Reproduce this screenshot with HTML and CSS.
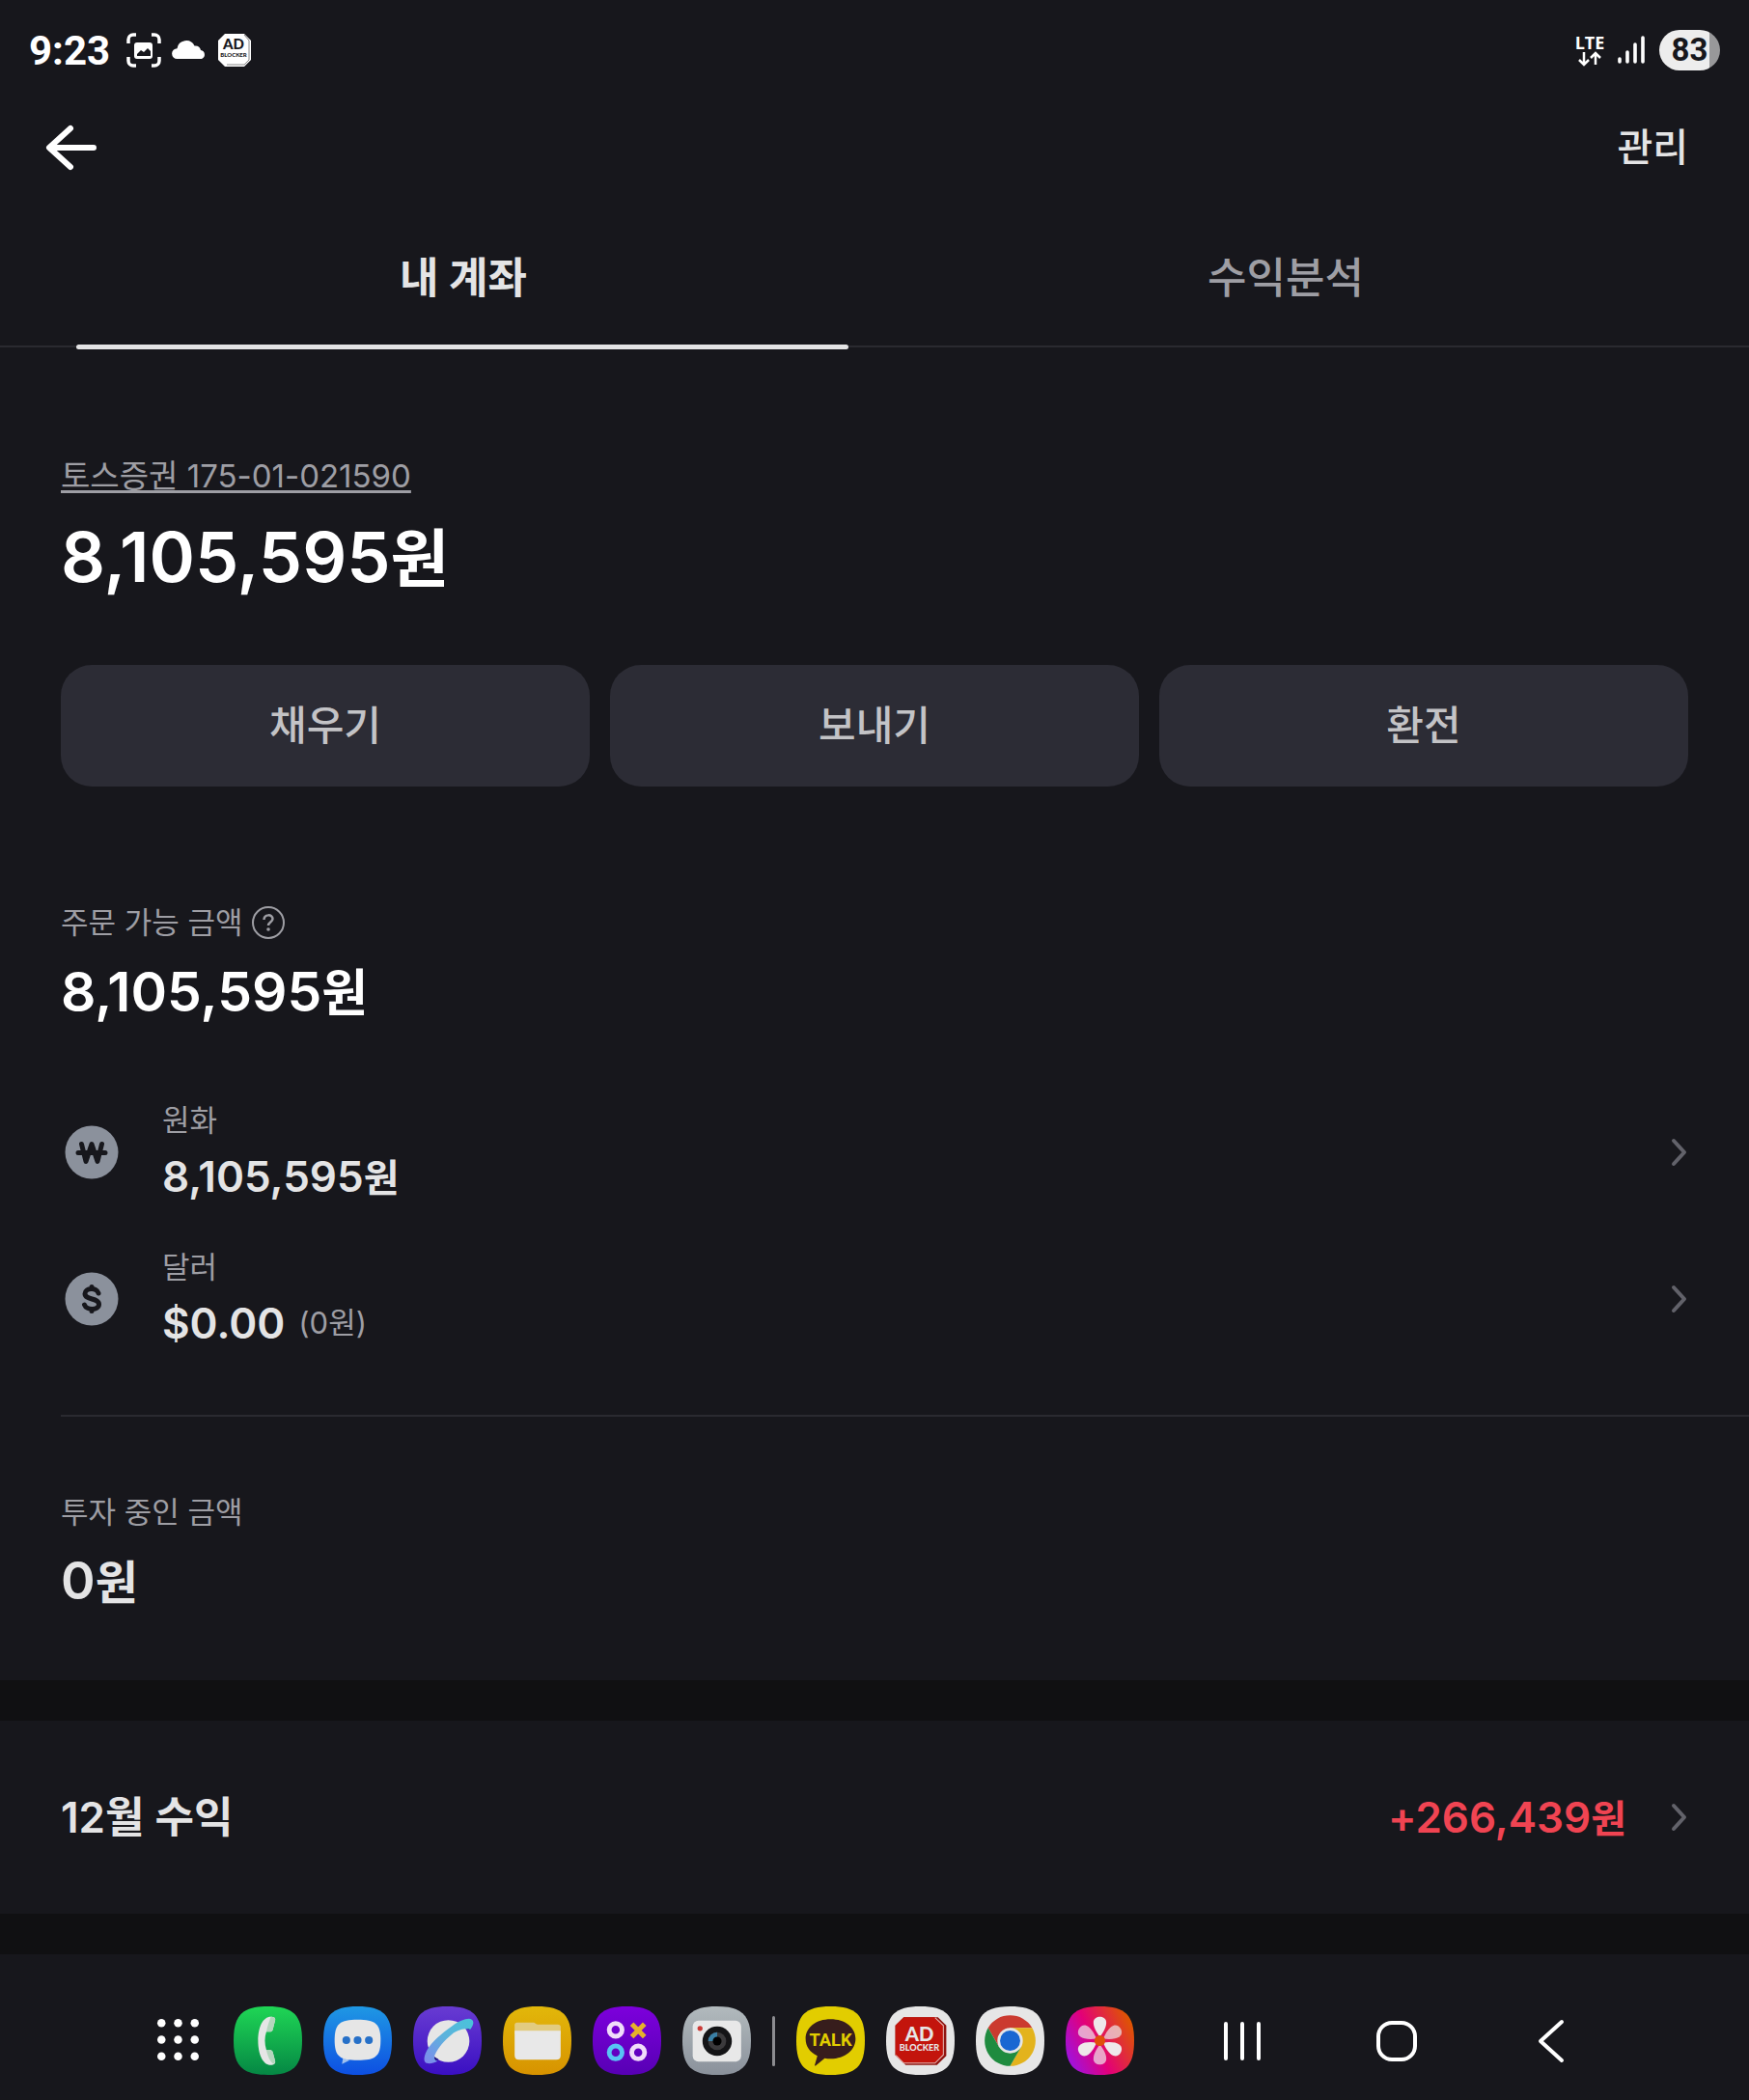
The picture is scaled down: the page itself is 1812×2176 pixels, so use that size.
FILE: index.html
```html
<!DOCTYPE html>
<html lang="ko">
<head>
    <meta charset="UTF-8">
    <meta name="viewport" content="width=device-width, initial-scale=1.0">
    <title>내 계좌</title>
    <link rel="stylesheet" href="styles.css">
</head>
<body>
    <div class="status-bar">
        <div class="status-left">
            <span class="clock">9:23</span>
            <svg width="36" height="36" viewBox="0 0 36 36">
                <path d="M2 11V7a5 5 0 0 1 5-5h3M26 2h3a5 5 0 0 1 5 5v4M34 25v4a5 5 0 0 1-5 5h-3M10 34H7a5 5 0 0 1-5-5v-4" fill="none" stroke="#fff" stroke-width="3.500"/>
                <rect x="8" y="10" width="19" height="17" rx="3" fill="#fff"/>
                <path d="M11 24v-2l4-4 3 2 4-4 3 3v5z" fill="#17171c"/>
            </svg>
            <svg width="36" height="36" viewBox="0 0 36 36">
                <path d="M5.500 27a5.400 5.400 0 0 1 0-10.800 9.500 9.500 0 0 1 18-2.700c3.500-.5 6 1.500 6.500 4.500A4.700 4.700 0 0 1 31 27z" fill="#fff"/>
            </svg>
            <svg width="36" height="36" viewBox="0 0 36 36">
                <path d="M8 1h20l7 7v20l-7 7H8l-7-7V8z" fill="#fff"/>
                <path d="M28 2l5 6v20l-5 5H10" fill="none" stroke="#888" stroke-width="1"/>
                <text x="17" y="17" class="ad-text" font-size="15" fill="#17171c">AD</text>
                <text x="17" y="25" class="ad-text" font-size="6" fill="#17171c">BLOCKER</text>
            </svg>
        </div>
        <div class="status-right">
            <svg width="35" height="40" viewBox="0 0 35 40">
                <text x="18" y="19" class="lte-text">LTE</text>
                <path d="M12 22v12M7 30l5 5 5-5M24 35V23M19 28l5-5 5 5" fill="none" stroke="#fff" stroke-width="2.500"/>
            </svg>
            <svg width="30" height="36" viewBox="0 0 30 36">
                <path d="M3 27v3M11 20v10M19 12v18M27 5v25" stroke="#fff" stroke-width="3.600" stroke-linecap="round"/>
            </svg>
            <span class="battery">83</span>
        </div>
    </div>

    <header class="header">
        <button class="back" aria-label="뒤로">
            <svg width="56" height="56" viewBox="0 0 56 56">
                <path d="M51 28H6M27 8L5 28l22 20" fill="none" stroke="#fff" stroke-width="6" stroke-linecap="round" stroke-linejoin="round"/>
            </svg>
        </button>
        <button class="manage">관리</button>
    </header>

    <nav class="tabs">
        <button class="tab active">내 계좌</button>
        <button class="tab">수익분석</button>
    </nav>

    <main>
        <section class="account">
            <a href="#" class="account-number">토스증권 175-01-021590</a>
            <h1 class="total">8,105,595<span class="won">원</span></h1>
            <div class="actions">
                <button class="action">채우기</button>
                <button class="action">보내기</button>
                <button class="action">환전</button>
            </div>
        </section>

        <section class="orderable">
            <div class="label">
                주문 가능 금액
                <button class="help" aria-label="도움말">
                    <svg width="36" height="36" viewBox="0 0 36 36">
                        <circle cx="18" cy="18" r="16" fill="none" stroke="#9e9ea4" stroke-width="2"/>
                        <path d="M13.500 15c0-6 9-6 9-1 0 3.500-4.500 3.500-4.500 7" fill="none" stroke="#9e9ea4" stroke-width="2.500"/>
                        <circle cx="18" cy="25" r="1.800" fill="#9e9ea4"/>
                    </svg>
                </button>
            </div>
            <h2 class="subtotal">8,105,595<span class="won">원</span></h2>

            <a href="#" class="currency">
                <svg class="coin" width="56" height="56" viewBox="0 0 56 56">
                    <circle cx="28" cy="28" r="27.500" fill="#8b919c"/>
                    <path d="M17.500 19.500l4.500 18 6-18 6 18 4.500-18M14 28.500h28" fill="none" stroke="#17171c" stroke-width="5" stroke-linecap="round" stroke-linejoin="round"/>
                </svg>
                <span class="currency-info">
                    <span class="label">원화</span>
                    <span class="amount">8,105,595<span class="won">원</span></span>
                </span>
                <svg class="chevron" width="18" height="30" viewBox="0 0 18 30">
                    <path d="M3 3l11 12L3 27" fill="none" stroke="#62626a" stroke-width="4" stroke-linecap="round" stroke-linejoin="round"/>
                </svg>
            </a>
            <a href="#" class="currency">
                <svg class="coin" width="56" height="56" viewBox="0 0 56 56">
                    <circle cx="28" cy="28" r="27.500" fill="#8b919c"/>
                    <path d="M35 22c-2-6.500-14-5.500-14 .5 0 7 14.500 4 14.500 11 0 6.500-13 6.500-15 .5M28 15.500v2M28 38.500v2" fill="none" stroke="#17171c" stroke-width="5" stroke-linecap="round"/>
                </svg>
                <span class="currency-info">
                    <span class="label">달러</span>
                    <span class="amount usd">$0.00<small>(0원)</small></span>
                </span>
                <svg class="chevron" width="18" height="30" viewBox="0 0 18 30">
                    <path d="M3 3l11 12L3 27" fill="none" stroke="#62626a" stroke-width="4" stroke-linecap="round" stroke-linejoin="round"/>
                </svg>
            </a>
        </section>

        <section class="invested">
            <div class="label">투자 중인 금액</div>
            <h2 class="invested-amount">0<span class="won">원</span></h2>
        </section>

        <a href="#" class="profit">
            <span class="profit-title">12월 수익</span>
            <span class="profit-value">+266,439<span class="won">원</span></span>
            <svg class="chevron" width="18" height="30" viewBox="0 0 18 30">
                <path d="M3 3l11 12L3 27" fill="none" stroke="#62626a" stroke-width="4" stroke-linecap="round" stroke-linejoin="round"/>
            </svg>
        </a>
    </main>

    <footer class="taskbar">
        <div class="dock">
            <button class="app" aria-label="앱 목록">
                <svg viewBox="0 0 70 70">
                    <g fill="#fff">
                        <circle cx="18" cy="17" r="4.200"/><circle cx="35" cy="17" r="4.200"/><circle cx="52" cy="17" r="4.200"/>
                        <circle cx="18" cy="34" r="4.200"/><circle cx="35" cy="34" r="4.200"/><circle cx="52" cy="34" r="4.200"/>
                        <circle cx="18" cy="51" r="4.200"/><circle cx="35" cy="51" r="4.200"/><circle cx="52" cy="51" r="4.200"/>
                    </g>
                </svg>
            </button>
            <button class="app" aria-label="전화">
                <svg viewBox="0 0 70 70">
                    <defs><linearGradient id="g-phone" x2="0" y2="1"><stop stop-color="#1fd655"/><stop offset="1" stop-color="#058744"/></linearGradient></defs>
                    <path d="M35 0C61 0 70 9 70 35S61 70 35 70 0 61 0 35 9 0 35 0Z" fill="url(#g-phone)"/>
                    <path d="M38 10.500c3 0 5 1 4.500 3.500L40 24c-.5 1.500-1.500 2-3 2h-3.500c-2 6-2 12 0 18.500H37c1.500 0 2.500.5 3 2L42.500 56c.5 2.500-1.500 4-4.500 4-8 0-13-11-13-25s5-24.500 13-24.500z" fill="#e6e6e6"/>
                    <path d="M38 10.500c3 0 5 1 4.500 3.500L40 24c-.5 1.500-1.500 2-3 2h-3.500c1-6 3-11 4.500-15.500zM33.500 44.500H37c1.500 0 2.500.5 3 2L42.500 56c0 1-.5 2-1.500 3-4-3-6-8-7.500-14.500z" fill="#b4d6bd"/>
                </svg>
            </button>
            <button class="app" aria-label="메시지">
                <svg viewBox="0 0 70 70">
                    <defs><linearGradient id="g-msg" x2="0" y2="1"><stop stop-color="#1f98e4"/><stop offset="1" stop-color="#0d4fe2"/></linearGradient></defs>
                    <path d="M35 0C61 0 70 9 70 35S61 70 35 70 0 61 0 35 9 0 35 0Z" fill="url(#g-msg)"/>
                    <path d="M20 53l-1 6 8-4z" fill="#9fc0ee"/>
                    <path d="M35 13.500c18 0 23.500 4 23.500 21S53 55 35 55s-23.500-3.500-23.500-20.500 5.500-21 23.500-21z" fill="#e6e6e6"/>
                    <g fill="#2670c8"><circle cx="23.500" cy="34.500" r="4"/><circle cx="35" cy="34.500" r="4"/><circle cx="46.500" cy="34.500" r="4"/></g>
                </svg>
            </button>
            <button class="app" aria-label="인터넷">
                <svg viewBox="0 0 70 70">
                    <defs>
                        <linearGradient id="g-web" x2="0" y2="1"><stop stop-color="#683bd2"/><stop offset="1" stop-color="#3a0fc2"/></linearGradient>
                        <linearGradient id="g-ring" x1="0" y1="1" x2="1" y2="0"><stop stop-color="#8088ee"/><stop offset=".5" stop-color="#5cb2dc"/><stop offset="1" stop-color="#48c4da"/></linearGradient>
                    </defs>
                    <path d="M35 0C61 0 70 9 70 35S61 70 35 70 0 61 0 35 9 0 35 0Z" fill="url(#g-web)"/>
                    <circle cx="36" cy="35.500" r="21.500" fill="#e6e6e6"/>
                    <path d="M53 22l5 2 2-8zM19 50l2 6 5-2z" fill="#1b1478"/>
                    <path d="M14 45c-4 8-3 12 0 13 3 1 7 0 11-2-3-1-4-3-3-6 4-9 10-15 17-21 6-5 12-6 16-6 2 0 3 0 3 1 3-4 5-8 2-10.500C57 11 48 14 40 20 29 28 19 36 14 45z" fill="url(#g-ring)"/>
                </svg>
            </button>
            <button class="app" aria-label="내 파일">
                <svg viewBox="0 0 70 70">
                    <defs><linearGradient id="g-file" x2="0" y2="1"><stop stop-color="#e2b70a"/><stop offset="1" stop-color="#d79300"/></linearGradient></defs>
                    <path d="M35 0C61 0 70 9 70 35S61 70 35 70 0 61 0 35 9 0 35 0Z" fill="url(#g-file)"/>
                    <path d="M12 28v-9c0-1.500 1-2.500 2.500-2.500h16c3 0 3 2 6 2H56c2 0 3 1 3 2.500v7z" fill="#e2cb80"/>
                    <path d="M12 25h47v25c0 3-1.500 4.500-4.500 4.500h-38c-3 0-4.500-1.500-4.500-4.500z" fill="#e8e8e8"/>
                </svg>
            </button>
            <button class="app" aria-label="게임">
                <svg viewBox="0 0 70 70">
                    <defs><linearGradient id="g-game" x2="0" y2="1"><stop stop-color="#7d00dc"/><stop offset="1" stop-color="#5700b4"/></linearGradient></defs>
                    <path d="M35 0C61 0 70 9 70 35S61 70 35 70 0 61 0 35 9 0 35 0Z" fill="url(#g-game)"/>
                    <g fill="none" stroke-width="4.800">
                        <circle cx="23.500" cy="24" r="6.600" stroke="#f0dcfa"/>
                        <circle cx="23.500" cy="47" r="6.600" stroke="#58c4f4"/>
                        <circle cx="46.500" cy="47" r="6.600" stroke="#f0dcfa"/>
                        <path d="M40 18l13 13M53 18L40 31" stroke="#e6b22a" stroke-width="5"/>
                    </g>
                </svg>
            </button>
            <button class="app" aria-label="카메라">
                <svg viewBox="0 0 70 70">
                    <defs><linearGradient id="g-cam" x2="0" y2="1"><stop stop-color="#b2babd"/><stop offset="1" stop-color="#8a919b"/></linearGradient></defs>
                    <path d="M35 0C61 0 70 9 70 35S61 70 35 70 0 61 0 35 9 0 35 0Z" fill="url(#g-cam)"/>
                    <rect x="10.500" y="14.500" width="49.500" height="42" rx="6" fill="#e8e8e8"/>
                    <circle cx="18" cy="22.500" r="2.600" fill="#cc3a36"/>
                    <circle cx="35.500" cy="35.500" r="15" fill="#141416"/>
                    <circle cx="35.500" cy="35.500" r="9.200" fill="#3b3a3c"/>
                    <path d="M35.500 35.500V26.300a9.200 9.200 0 0 0-9.200 9.200z" fill="#3a7fa4"/>
                    <circle cx="35.500" cy="35.500" r="4.500" fill="#000"/>
                </svg>
            </button>
            <span class="dock-divider"></span>
            <button class="app" aria-label="카카오톡">
                <svg viewBox="0 0 70 70">
                    <path d="M35 0C61 0 70 9 70 35S61 70 35 70 0 61 0 35 9 0 35 0Z" fill="#e2cd00"/>
                    <path d="M35 13c15 0 25.500 8.500 25.500 20S50 53.500 35 53.500c-2 0-4 0-6-.5l-9 7.500c-1 .5-1.500 0-1-1l2.500-9C14 47 9.500 41 9.500 33 9.500 21.500 20 13 35 13z" fill="#371d1c"/>
                    <text x="35" y="40" class="talk-text">TALK</text>
                </svg>
            </button>
            <button class="app" aria-label="광고 차단">
                <svg viewBox="0 0 70 70">
                    <path d="M35 0C61 0 70 9 70 35S61 70 35 70 0 61 0 35 9 0 35 0Z" fill="#e6e6e6"/>
                    <path d="M18 11h35l8.500 8.500v31L52 60H20L9.500 50V19.500z" fill="#8f1410"/>
                    <path d="M18 11h32l8.500 8.500v30L50 58H18l-8.500-8.500v-30z" fill="#c3140c"/>
                    <path d="M50 11.500l8.500 8v30L50 58H18l-8-8" fill="none" stroke="#e6b8b4" stroke-width="1"/>
                    <text x="34" y="35" class="ad-text" font-size="20" fill="#e6e6e6">AD</text>
                    <text x="34" y="45" class="ad-text" font-size="9" fill="#e6e6e6">BLOCKER</text>
                </svg>
            </button>
            <button class="app" aria-label="크롬">
                <svg viewBox="0 0 70 70">
                    <path d="M35 0C61 0 70 9 70 35S61 70 35 70 0 61 0 35 9 0 35 0Z" fill="#e6e6e6"/>
                    <path d="M12.500 22a26 26 0 0 1 45 0H35L23.700 41.500z" fill="#cb3a2f"/>
                    <path d="M57.500 22A26 26 0 0 1 35 61l11.300-19.500L35 22z" fill="#e3b31c"/>
                    <path d="M35 61A26 26 0 0 1 12.500 22l11.200 19.500h22.600z" fill="#1f8b3f"/>
                    <circle cx="35" cy="35" r="13" fill="#e6e6e6"/>
                    <circle cx="35" cy="35" r="10.300" fill="#1967d2"/>
                </svg>
            </button>
            <button class="app" aria-label="갤러리">
                <svg viewBox="0 0 70 70">
                    <defs>
                        <linearGradient id="g-gal" x1="0" y1=".8" x2="1" y2=".3"><stop stop-color="#9a14e6"/><stop offset=".45" stop-color="#e30078"/><stop offset="1" stop-color="#de5600"/></linearGradient>
                        <path id="petal" d="M35 31c-4-5-7-11-6.500-15.500.5-3.500 3.500-5 6.500-5s6 1.500 6.500 5C42 20 39 26 35 31z"/>
                    </defs>
                    <path d="M35 0C61 0 70 9 70 35S61 70 35 70 0 61 0 35 9 0 35 0Z" fill="url(#g-gal)"/>
                    <g fill="#eee8ea">
                        <use href="#petal"/>
                        <use href="#petal" transform="rotate(120 35 35)"/>
                        <use href="#petal" transform="rotate(240 35 35)"/>
                        <g opacity=".7">
                            <use href="#petal" transform="rotate(60 35 35)"/>
                            <use href="#petal" transform="rotate(180 35 35)"/>
                            <use href="#petal" transform="rotate(300 35 35)"/>
                        </g>
                    </g>
                    <circle cx="35" cy="35" r="5.500" fill="#e0500a"/>
                </svg>
            </button>
        </div>
        <div class="nav-keys">
            <button class="key" aria-label="최근 앱">
                <svg width="48" height="48" viewBox="0 0 48 48">
                    <path d="M7 6v36M24 6v36M41 6v36" stroke="#fff" stroke-width="4" stroke-linecap="round"/>
                </svg>
            </button>
            <button class="key" aria-label="홈">
                <svg width="48" height="48" viewBox="0 0 48 48">
                    <rect x="5" y="5" width="38" height="38" rx="14" fill="none" stroke="#fff" stroke-width="4"/>
                </svg>
            </button>
            <button class="key" aria-label="이전">
                <svg width="48" height="48" viewBox="0 0 48 48">
                    <path d="M35 4L13 24l22 20" fill="none" stroke="#fff" stroke-width="4" stroke-linecap="round" stroke-linejoin="round"/>
                </svg>
            </button>
        </div>
    </footer>
</body>
</html>
```
FILE: styles.css
```css
* {
    box-sizing: border-box;
}

body {
    margin: 0;
    background-color: #17171c;
    color: #e4e4e5;
    font-family: Inter, "Noto Sans CJK KR", sans-serif;
    font-size: 32px;
}

button {
    background: none;
    border: none;
    padding: 0;
    margin: 0;
    color: inherit;
    font-family: inherit;
    cursor: pointer;
}

a {
    color: inherit;
    text-decoration: none;
}

svg {
    display: block;
    flex: none;
}

h1, h2 {
    margin: 0;
    font-weight: 600;
}

/* 상태 표시줄 */
.status-bar {
    display: flex;
    justify-content: space-between;
    align-items: center;
    height: 104px;
    padding: 0 30px;
    color: #fff;
}

.status-left, .status-right {
    display: flex;
    align-items: center;
    gap: 11px;
}

.clock {
    font-family: Roboto, sans-serif;
    font-size: 42px;
    font-weight: 700;
    margin-right: 6px;
}

.ad-text {
    font-family: Lato, sans-serif;
    font-weight: 900;
    text-anchor: middle;
}

.lte-text {
    font-family: "Open Sans", sans-serif;
    font-size: 18px;
    font-weight: 700;
    fill: #fff;
    text-anchor: middle;
}

.battery {
    width: 63px;
    height: 42px;
    margin-left: 3px;
    border-radius: 21px;
    background: linear-gradient(to right, #ededed 83%, #98989a 83%);
    color: #17171c;
    font-family: Roboto, sans-serif;
    font-size: 33px;
    font-weight: 700;
    line-height: 42px;
    text-align: center;
}

/* 헤더, 탭 */
.header {
    display: flex;
    justify-content: space-between;
    align-items: center;
    height: 98px;
    padding: 0 63px 0 46px;
}

.manage {
    font-size: 40px;
    font-weight: 500;
    line-height: 60px;
}

.tabs {
    display: flex;
    padding: 0 54px;
    border-bottom: 2px solid #2a2a30;
}

.tab {
    flex: 1;
    position: relative;
    padding: 56px 0 40px;
    font-size: 44px;
    font-weight: 500;
    line-height: 60px;
    color: #9e9ea4;
}

.tab.active {
    font-weight: 700;
    color: #e4e4e5;
}

.tab.active::after {
    content: "";
    position: absolute;
    left: 25px;
    right: 27px;
    bottom: -4px;
    height: 5px;
    border-radius: 3px;
    background-color: #e4e4e5;
}

/* 계좌 */
.account {
    padding: 109px 63px 0;
}

.account-number {
    display: block;
    width: fit-content;
    color: #9e9ea4;
    font-size: 33px;
    line-height: 48px;
    text-decoration: underline;
    text-decoration-thickness: 3px;
    text-underline-offset: 3px;
    text-decoration-skip-ink: none;
}

.won {
    line-height: 1;
}

.total {
    color: #fff;
    font-size: 72px;
    line-height: 96px;
    margin-top: 12px;
}

.total .won {
    font-size: 66px;
}

.actions {
    display: grid;
    grid-template-columns: repeat(3, 1fr);
    gap: 21px;
    margin-top: 64px;
}

.action {
    height: 126px;
    border-radius: 32px;
    background-color: #2c2c35;
    color: #c3c3c6;
    font-size: 42px;
    font-weight: 500;
    line-height: 60px;
}

.label {
    display: flex;
    align-items: center;
    gap: 8px;
    color: #9e9ea4;
    font-size: 31px;
    font-weight: 400;
    line-height: 48px;
}

.orderable {
    margin-left: 63px;
    padding: 117px 63px 45px 0;
    border-bottom: 2px solid #2a2a30;
}

.subtotal {
    color: #fff;
    font-size: 57px;
    line-height: 80px;
    margin: 8px 0 49px;
}

.subtotal .won {
    font-size: 52px;
}

.currency {
    display: flex;
    align-items: center;
    padding: 20px 0 18px;
}

.coin {
    margin: 0 45px 0 4px;
}

.currency-info {
    flex: 1;
}

.amount {
    display: block;
    margin-top: 2px;
    font-size: 44px;
    font-weight: 600;
    line-height: 64px;
}

.amount .won, .profit-value .won {
    font-size: 40px;
}

.amount.usd {
    display: flex;
    align-items: center;
    gap: 14px;
}

.amount small {
    color: #9e9ea4;
    font-size: 31px;
    font-weight: 400;
}

.invested {
    padding: 75px 63px 63px;
    border-bottom: 42px solid #101012;
}

.invested-amount {
    font-size: 54px;
    line-height: 80px;
    margin-top: 7px;
}

.invested-amount .won {
    font-size: 48px;
}

.profit {
    display: flex;
    align-items: center;
    height: 242px;
    padding: 0 63px;
    border-bottom: 42px solid #101012;
    font-size: 44px;
    font-weight: 600;
    line-height: 64px;
}

.profit-title {
    flex: 1;
}

.profit-value {
    color: #f04452;
    margin-right: 46px;
}

/* 하단 작업 표시줄 */
.taskbar {
    display: flex;
    justify-content: center;
    align-items: center;
    gap: 88px;
    height: 151px;
    padding: 28px 32px 0 0;
}

.dock {
    display: flex;
    align-items: center;
    gap: 22px;
}

.app, .app svg {
    width: 71px;
    height: 71px;
}

.dock-divider {
    width: 3px;
    height: 52px;
    border-radius: 2px;
    background-color: #8c8c90;
}

.talk-text {
    font-family: Roboto, sans-serif;
    font-size: 18px;
    font-weight: 700;
    fill: #e2cd00;
    text-anchor: middle;
}

.nav-keys {
    display: flex;
    gap: 112px;
}
```
